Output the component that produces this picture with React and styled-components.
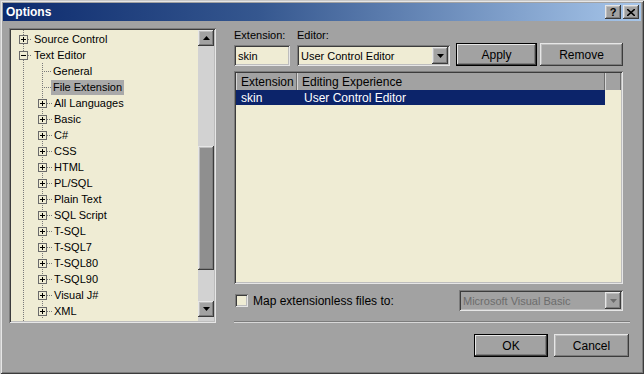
import React from "react";
import styled, { createGlobalStyle, css } from "styled-components";

const GlobalStyle = createGlobalStyle`
  html, body {
    margin: 0;
    padding: 0;
    background: #a2a2a2;
  }
  body {
    font-family: "Liberation Sans", Arial, sans-serif;
    font-size: 11px;
    color: #000;
  }
`;

const raised = css`
  box-shadow: inset -1px -1px #3c3c3c, inset 1px 1px #e6e6e6,
    inset -2px -2px #7c7c7c, inset 2px 2px #bdbdbd;
`;

const sunken = css`
  box-shadow: inset 1px 1px #7c7c7c, inset -1px -1px #e6e6e6,
    inset 2px 2px #3c3c3c, inset -2px -2px #bdbdbd;
`;

const cream = "#efecd4";

const Window = styled.div`
  width: 644px;
  height: 374px;
  box-sizing: border-box;
  padding: 3px;
  background: #a2a2a2;
  display: flex;
  flex-direction: column;
  box-shadow: inset 1px 1px #c8c8c8, inset -1px -1px #3c3c3c,
    inset 2px 2px #e6e6e6, inset -2px -2px #7c7c7c;
`;

const TitleBar = styled.div`
  height: 18px;
  display: flex;
  align-items: center;
  justify-content: space-between;
  padding: 0 2px 0 3px;
  background: linear-gradient(to right, #0d2b6e 0%, #35578f 40%, #a7c6ea 100%);
`;

const Title = styled.span`
  color: #fff;
  font-weight: bold;
  font-size: 12px;
`;

const TitleButtons = styled.div`
  display: flex;
  gap: 2px;
`;

const CaptionButton = styled.div`
  width: 16px;
  height: 14px;
  background: #a2a2a2;
  ${raised};
  display: flex;
  align-items: center;
  justify-content: center;
  font-weight: bold;
  font-size: 11px;
  line-height: 1;
`;

const Main = styled.div`
  display: flex;
  padding: 7px 11px 0 6px;
`;

const TreePanel = styled.div`
  width: 207px;
  height: 295px;
  box-sizing: border-box;
  padding: 2px;
  background: ${cream};
  ${sunken};
  display: flex;
  overflow: hidden;
`;

const TreeBody = styled.div`
  flex: 1;
  padding-top: 1px;
  overflow: hidden;
  background-image: repeating-linear-gradient(
    to bottom,
    #7a7a7a 0 1px,
    transparent 1px 2px
  );
  background-size: 1px 100%;
  background-repeat: no-repeat;
  background-position: 12px 0;
`;

const Children = styled.div`
  background-image: repeating-linear-gradient(
    to bottom,
    #7a7a7a 0 1px,
    transparent 1px 2px
  );
  background-size: 1px 100%;
  background-repeat: no-repeat;
  background-position: 31px 0;
`;

const Row = styled.div`
  height: 16px;
  display: flex;
  align-items: center;
  padding-left: ${(p) => 8 + p.$level * 19}px;
`;

const Expander = styled.div`
  width: 9px;
  height: 9px;
  box-sizing: border-box;
  border: 1px solid #6a6a6a;
  background: ${cream};
  position: relative;
  flex: none;
  &::before {
    content: "";
    position: absolute;
    left: 1px;
    top: 3px;
    width: 5px;
    height: 1px;
    background: #000;
  }
  ${(p) =>
    p.$plus &&
    css`
      &::after {
        content: "";
        position: absolute;
        left: 3px;
        top: 1px;
        width: 1px;
        height: 5px;
        background: #000;
      }
    `}
`;

const Stub = styled.div`
  width: ${(p) => p.$w}px;
  margin-left: ${(p) => p.$ml || 0}px;
  height: 1px;
  flex: none;
  background-image: repeating-linear-gradient(
    to right,
    #7a7a7a 0 1px,
    transparent 1px 2px
  );
`;

const Label = styled.span`
  padding: 1px 2px;
  line-height: 13px;
  white-space: nowrap;
  background: ${(p) => (p.$selected ? "#a9a9a9" : "transparent")};
`;

const ScrollBar = styled.div`
  width: 16px;
  flex: none;
  display: flex;
  flex-direction: column;
  background: #d2d2d2;
`;

const ScrollButton = styled.div`
  height: 16px;
  flex: none;
  background: #a2a2a2;
  ${raised};
  display: flex;
  align-items: center;
  justify-content: center;
`;

const Track = styled.div`
  flex: none;
  height: ${(p) => p.$h}px;
`;

const Thumb = styled.div`
  height: 124px;
  background: #8f8f8f;
  ${raised};
`;

const RightPane = styled.div`
  margin-left: 18px;
  width: 396px;
  display: flex;
  flex-direction: column;
`;

const TopRow = styled.div`
  display: flex;
  align-items: flex-end;
  margin-top: 1px;
`;

const Field = styled.div`
  display: flex;
  flex-direction: column;
  gap: 3px;
  margin-right: ${(p) => p.$mr || 0}px;
`;

const FieldLabel = styled.span`
  line-height: 13px;
`;

const TextBox = styled.div`
  width: ${(p) => p.$w}px;
  height: 21px;
  box-sizing: border-box;
  padding: 3px 4px;
  background: ${(p) => (p.$disabled ? "#a2a2a2" : cream)};
  color: ${(p) => (p.$disabled ? "#6c6c6c" : "#000")};
  ${sunken};
  display: flex;
  align-items: center;
  justify-content: space-between;
`;

const DropButton = styled.div`
  width: 16px;
  height: 17px;
  margin-right: -2px;
  background: #a2a2a2;
  ${raised};
  display: flex;
  align-items: center;
  justify-content: center;
`;

const Button = styled.button`
  width: ${(p) => p.$w}px;
  height: 23px;
  margin-left: ${(p) => p.$ml || 0}px;
  padding: 0;
  border: none;
  background: #a2a2a2;
  font: inherit;
  font-size: 12px;
  color: #000;
  ${raised};
  ${(p) =>
    p.$default &&
    css`
      box-shadow: inset 0 0 0 1px #000, inset -2px -2px #3c3c3c,
        inset 2px 2px #e6e6e6, inset -3px -3px #7c7c7c;
    `}
`;

const ListView = styled.div`
  margin-top: 5px;
  width: 389px;
  height: 213px;
  box-sizing: border-box;
  padding: 2px;
  background: ${cream};
  ${sunken};
`;

const HeaderRow = styled.div`
  display: flex;
  height: 17px;
  background: #a2a2a2;
`;

const HeaderCell = styled.div`
  width: ${(p) => p.$w}px;
  flex: none;
  box-sizing: border-box;
  padding-left: 5px;
  display: flex;
  align-items: center;
  font-size: 12px;
  box-shadow: inset -1px 0 #6e6e6e, inset 1px 0 #d6d6d6;
`;

const ItemRow = styled.div`
  display: flex;
  height: 15px;
  width: 369px;
  align-items: center;
  background: ${(p) => (p.$selected ? "#0c246a" : "transparent")};
  color: ${(p) => (p.$selected ? "#fff" : "#000")};
  font-size: 12px;
`;

const ItemCell = styled.div`
  width: ${(p) => p.$w}px;
  padding-left: ${(p) => p.$pl}px;
  box-sizing: border-box;
`;

const OptionRow = styled.div`
  display: flex;
  align-items: center;
  justify-content: space-between;
  margin-top: 7px;
  width: 389px;
  height: 19px;
`;

const CheckLabel = styled.label`
  display: flex;
  align-items: center;
  gap: 5px;
  font-size: 12px;
  padding-left: 1px;
`;

const CheckBox = styled.span`
  width: 13px;
  height: 13px;
  box-sizing: border-box;
  background: ${cream};
  ${sunken};
`;

const Separator = styled.div`
  margin-top: 11px;
  height: 1px;
  width: 396px;
  background: #7c7c7c;
  border-bottom: 1px solid #d8d8d8;
`;

const Footer = styled.div`
  display: flex;
  justify-content: flex-end;
  padding: 11px 12px 0 0;
`;

const Arrow = ({ dir = "down", color = "#000" }) => (
  <svg width="7" height="4" viewBox="0 0 7 4">
    <path
      d={dir === "up" ? "M0 4 L3.5 0 L7 4 Z" : "M0 0 L7 0 L3.5 4 Z"}
      fill={color}
    />
  </svg>
);

const languages = [
  "All Languages",
  "Basic",
  "C#",
  "CSS",
  "HTML",
  "PL/SQL",
  "Plain Text",
  "SQL Script",
  "T-SQL",
  "T-SQL7",
  "T-SQL80",
  "T-SQL90",
  "Visual J#",
  "XML",
];

export default function App() {
  return (
    <>
      <GlobalStyle />
      <Window>
        <TitleBar>
          <Title>Options</Title>
          <TitleButtons>
            <CaptionButton>?</CaptionButton>
            <CaptionButton>
              <svg width="8" height="7" viewBox="0 0 8 7">
                <path d="M0 0 L8 7 M8 0 L0 7" stroke="#000" strokeWidth="1.6" />
              </svg>
            </CaptionButton>
          </TitleButtons>
        </TitleBar>
        <Main>
          <TreePanel>
            <TreeBody>
              <Row $level={0}>
                <Expander $plus />
                <Stub $w={4} />
                <Label>Source Control</Label>
              </Row>
              <Row $level={0}>
                <Expander />
                <Stub $w={4} />
                <Label>Text Editor</Label>
              </Row>
              <Children>
                <Row $level={1}>
                  <Stub $w={9} $ml={4} />
                  <Label>General</Label>
                </Row>
                <Row $level={1}>
                  <Stub $w={9} $ml={4} />
                  <Label $selected>File Extension</Label>
                </Row>
                {languages.map((name) => (
                  <Row key={name} $level={1}>
                    <Expander $plus />
                    <Stub $w={5} />
                    <Label>{name}</Label>
                  </Row>
                ))}
              </Children>
            </TreeBody>
            <ScrollBar>
              <ScrollButton>
                <Arrow dir="up" />
              </ScrollButton>
              <Track $h={100} />
              <Thumb />
              <Track $h={31} />
              <ScrollButton>
                <Arrow />
              </ScrollButton>
            </ScrollBar>
          </TreePanel>

          <RightPane>
            <TopRow>
              <Field $mr={7}>
                <FieldLabel>Extension:</FieldLabel>
                <TextBox $w={56}>skin</TextBox>
              </Field>
              <Field>
                <FieldLabel>Editor:</FieldLabel>
                <TextBox $w={153}>
                  User Control Editor
                  <DropButton>
                    <Arrow />
                  </DropButton>
                </TextBox>
              </Field>
              <Button $w={81} $ml={6} $default>
                Apply
              </Button>
              <Button $w={83} $ml={3}>
                Remove
              </Button>
            </TopRow>

            <ListView>
              <HeaderRow>
                <HeaderCell $w={61}>Extension</HeaderCell>
                <HeaderCell $w={308}>Editing Experience</HeaderCell>
                <HeaderCell $w={16} />
              </HeaderRow>
              <ItemRow $selected>
                <ItemCell $w={61} $pl={5}>
                  skin
                </ItemCell>
                <ItemCell $w={300} $pl={7}>
                  User Control Editor
                </ItemCell>
              </ItemRow>
            </ListView>

            <OptionRow>
              <CheckLabel>
                <CheckBox />
                Map extensionless files to:
              </CheckLabel>
              <TextBox $w={164} $disabled>
                Microsoft Visual Basic
                <DropButton>
                  <Arrow color="#6c6c6c" />
                </DropButton>
              </TextBox>
            </OptionRow>

            <Separator />
          </RightPane>
        </Main>
        <Footer>
          <Button $w={74} $default>
            OK
          </Button>
          <Button $w={75} $ml={6}>
            Cancel
          </Button>
        </Footer>
      </Window>
    </>
  );
}
